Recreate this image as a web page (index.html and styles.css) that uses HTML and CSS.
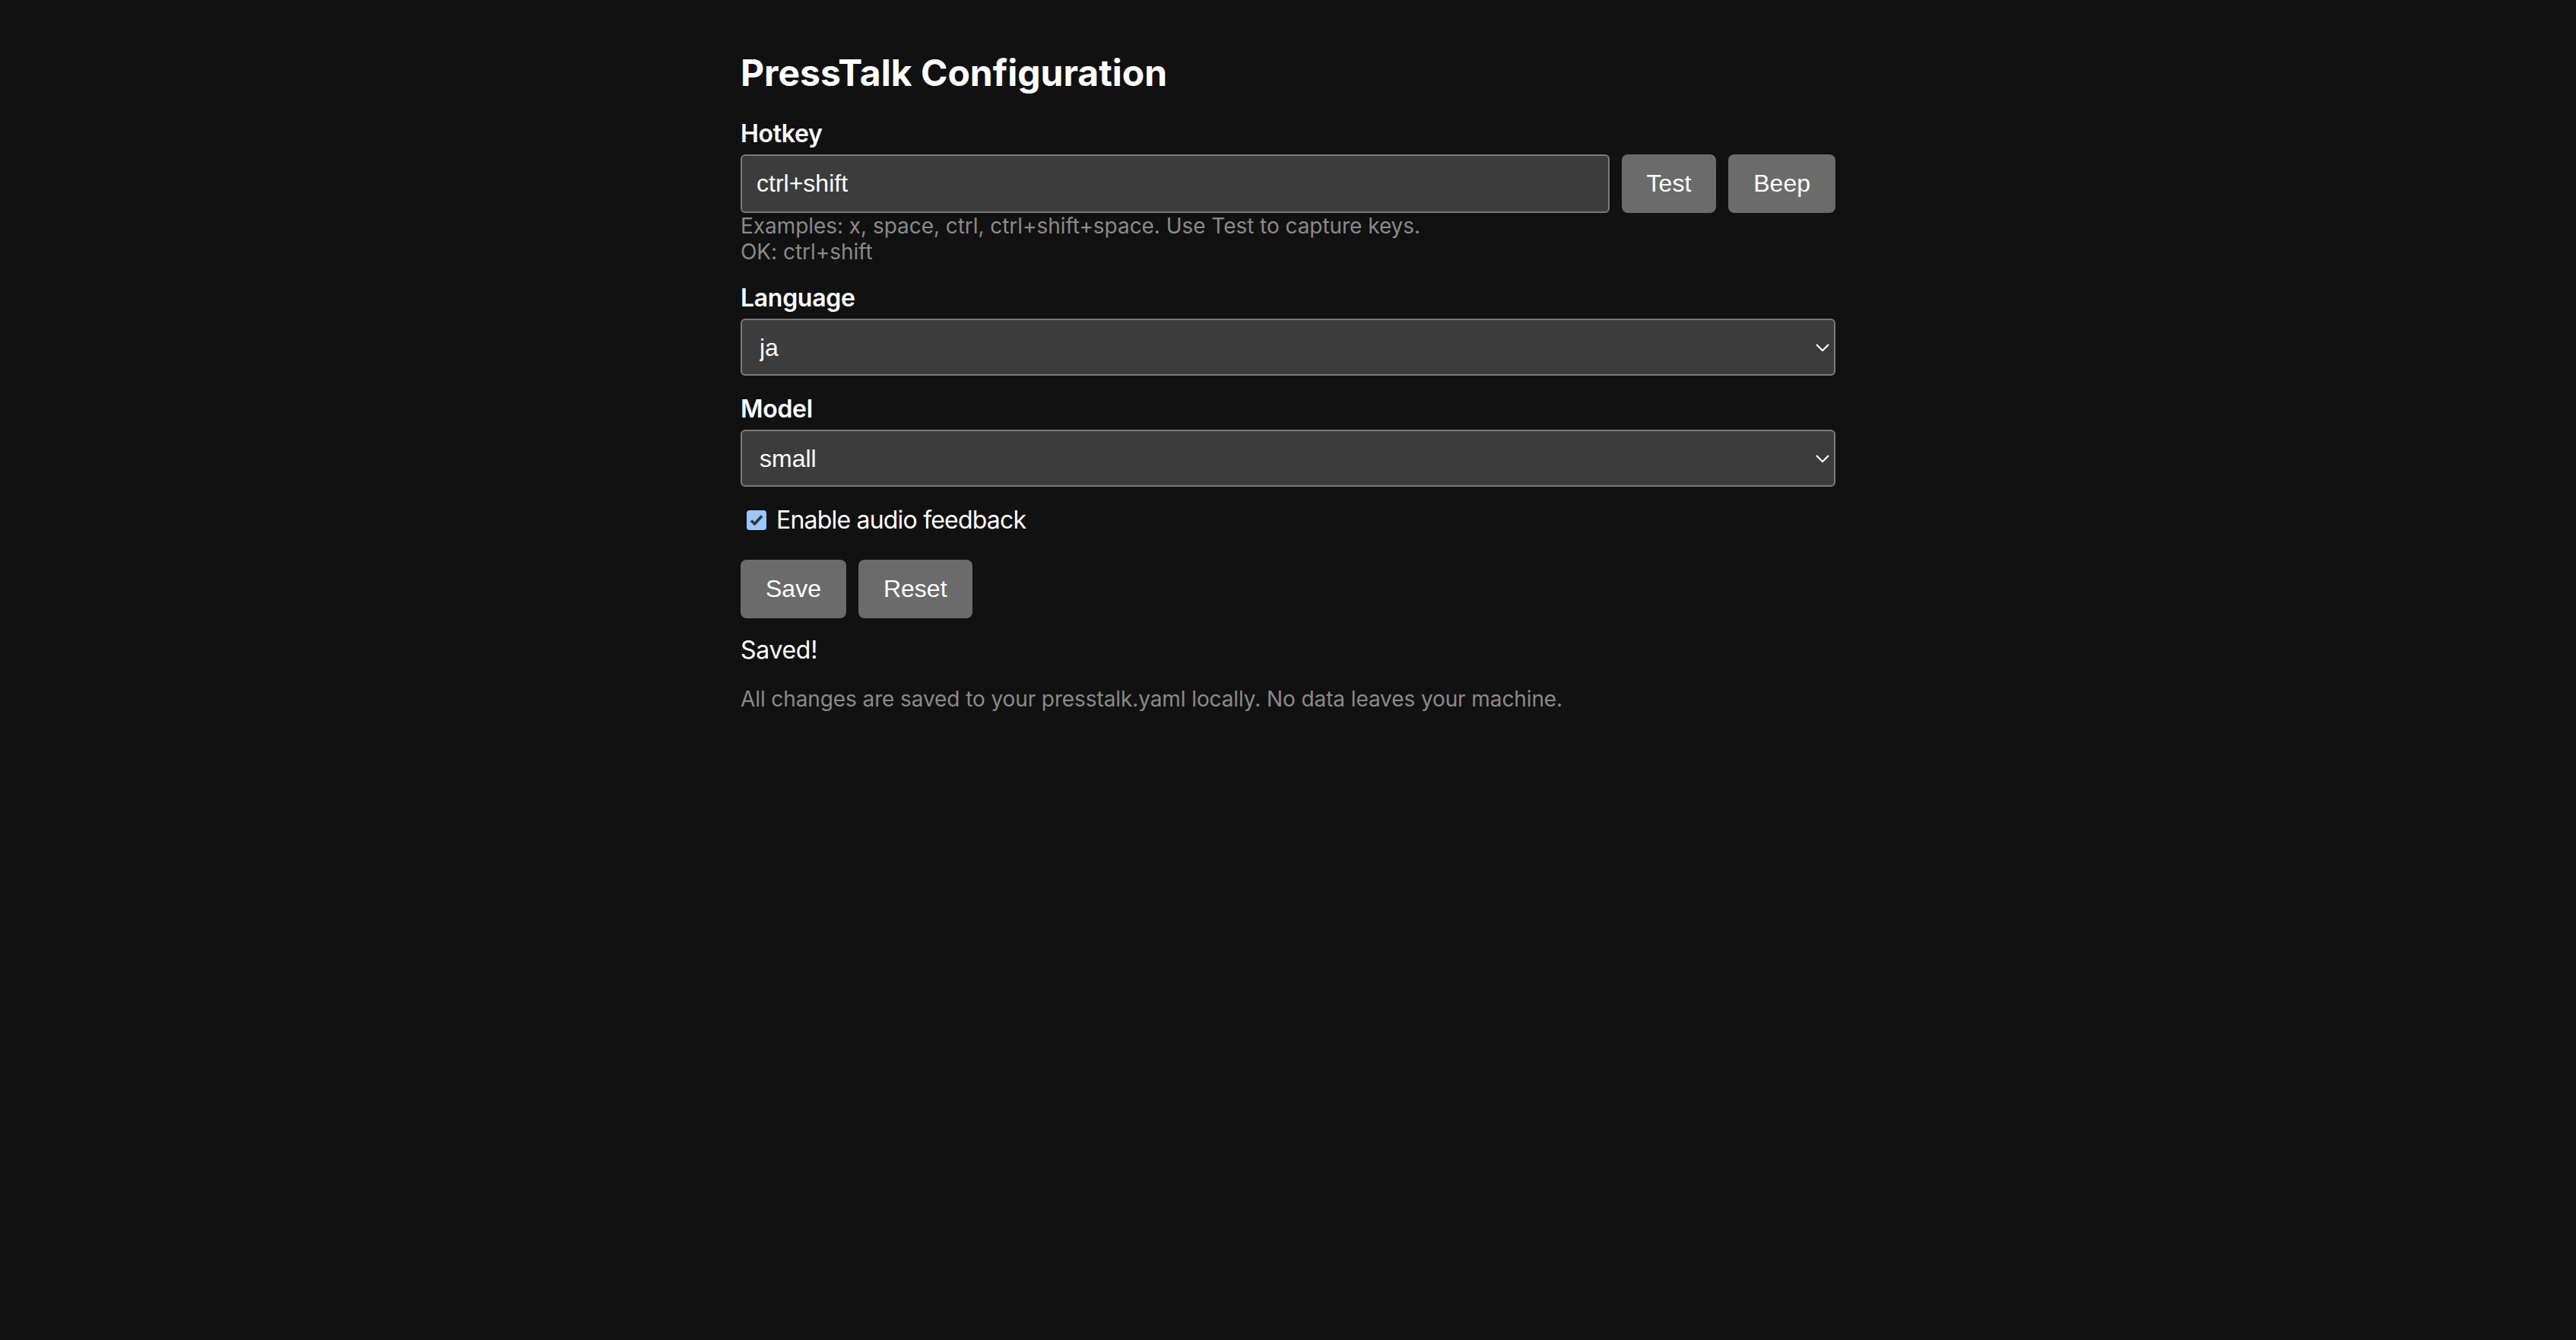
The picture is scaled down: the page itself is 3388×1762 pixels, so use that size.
FILE: index.html
```html
<!DOCTYPE html>
<html lang="en">
<head>
<meta charset="utf-8">
<title>PressTalk Configuration</title>
<link rel="stylesheet" href="styles.css">
</head>
<body>
<main class="page">
  <h1 class="title">PressTalk Configuration</h1>

  <div class="field">
    <label class="field-label" for="hotkey">Hotkey</label>
    <div class="hotkey-row">
      <input id="hotkey" class="text-input" type="text" value="ctrl+shift">
      <button class="btn" type="button">Test</button>
      <button class="btn" type="button">Beep</button>
    </div>
    <div class="hint">Examples: x, space, ctrl, ctrl+shift+space. Use Test to capture keys.</div>
    <div class="hint">OK: ctrl+shift</div>
  </div>

  <div class="field">
    <label class="field-label" for="language">Language</label>
    <div class="select-wrap">
      <select id="language" class="select">
        <option selected>ja</option>
        <option>en</option>
      </select>
      <svg class="chevron" width="18" height="10" viewBox="0 0 18 10"><path d="M1 1 L9 9 L17 1" fill="none" stroke="#ffffff" stroke-width="2.2"/></svg>
    </div>
  </div>

  <div class="field">
    <label class="field-label" for="model">Model</label>
    <div class="select-wrap">
      <select id="model" class="select">
        <option selected>small</option>
        <option>base</option>
        <option>medium</option>
      </select>
      <svg class="chevron" width="18" height="10" viewBox="0 0 18 10"><path d="M1 1 L9 9 L17 1" fill="none" stroke="#ffffff" stroke-width="2.2"/></svg>
    </div>
  </div>

  <label class="check-row">
    <span class="checkbox"><svg width="26" height="26" viewBox="0 0 26 26"><path d="M6 13.5 L10.5 18 L20 7.5" fill="none" stroke="#333333" stroke-width="3.6"/></svg></span>
    <span>Enable audio feedback</span>
  </label>

  <div class="actions">
    <button class="btn btn-lg" type="button">Save</button>
    <button class="btn btn-lg" type="button">Reset</button>
  </div>

  <div class="status">Saved!</div>

  <p class="footnote">All changes are saved to your presstalk.yaml locally. No data leaves your machine.</p>
</main>
</body>
</html>
```

FILE: styles.css
```css
html, body {
  margin: 0;
  padding: 0;
  background: #111111;
}

body {
  font-family: Inter, "Noto Sans", sans-serif;
  color: #ffffff;
}

.page {
  max-width: 1440px;
  margin: 0 auto;
  padding-top: 67px;
}

.title {
  margin: 0 0 31px;
  font-size: 48px;
  line-height: 58px;
  font-weight: 700;
  letter-spacing: 0;
}

.field {
  margin-bottom: 24px;
}

.field-label {
  display: block;
  font-size: 32px;
  line-height: 40px;
  font-weight: 600;
  margin-bottom: 7px;
  letter-spacing: -0.3px;
}

.hotkey-row {
  display: flex;
  gap: 16px;
}

.text-input {
  flex: 1;
  min-width: 0;
  box-sizing: border-box;
  height: 77px;
  margin: 0;
  padding: 0 19px;
  border: 2px solid #7a7a7a;
  border-radius: 6px;
  background: #3c3c3c;
  color: #ffffff;
  font-family: "Liberation Sans", Arial, sans-serif;
  font-size: 32px;
  outline: none;
}

.btn {
  margin: 0;
  border: none;
  border-radius: 8px;
  background: #6b6b6b;
  color: #ffffff;
  font-family: "Liberation Sans", Arial, sans-serif;
  font-size: 32px;
  padding: 0 33px;
}

.btn-lg {
  height: 77px;
}

.hint {
  font-size: 28px;
  line-height: 34px;
  color: #8a8a8a;
  letter-spacing: -0.05px;
}

.select-wrap {
  position: relative;
}

.select {
  display: block;
  width: 100%;
  box-sizing: border-box;
  height: 75px;
  margin: 0;
  padding: 0 50px 0 23px;
  appearance: none;
  -webkit-appearance: none;
  border: 2px solid #7a7a7a;
  border-radius: 6px;
  background: #3c3c3c;
  color: #ffffff;
  font-family: "Liberation Sans", Arial, sans-serif;
  font-size: 32px;
  outline: none;
}

.chevron {
  position: absolute;
  right: 8px;
  top: 50%;
  margin-top: -5px;
  pointer-events: none;
}

.check-row {
  display: flex;
  align-items: center;
  height: 40px;
  font-size: 32px;
  line-height: 40px;
  letter-spacing: -0.8px;
  margin-bottom: 32px;
}

.checkbox {
  display: block;
  width: 26px;
  height: 26px;
  margin: 0 13px 0 8px;
  border-radius: 4px;
  background: #99c8ff;
}

.checkbox svg {
  display: block;
}

.actions {
  display: flex;
  gap: 16px;
}

.status {
  margin-top: 22px;
  font-size: 32px;
  line-height: 40px;
  letter-spacing: -0.3px;
}

.footnote {
  margin: 27px 0 0;
  font-size: 28px;
  line-height: 34px;
  color: #8a8a8a;
  letter-spacing: -0.1px;
}
```
